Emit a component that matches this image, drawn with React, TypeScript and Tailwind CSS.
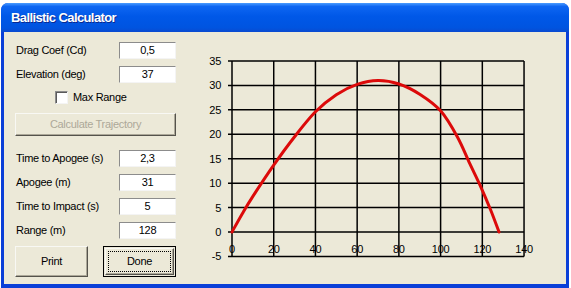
import React from "react";

// Ballistic calculator window, XP style
const X = (v: number) => 37 + v * 2.086;
const Y = (v: number) => 182 - v * 4.886;

const curve: [number, number][] = [
  [0, 0], [5, 3.8], [10, 7.3], [20, 13.7], [30, 19.5], [40, 24.6], [50, 28.1],
  [60, 30.2], [70, 31], [80, 30.3], [90, 28.2], [100, 24.8], [108, 19.5],
  [114, 14], [119, 9.5], [124, 4.5], [128, 0],
];

function smoothPath(data: [number, number][]) {
  const pts = data.map(([a, b]) => [X(a), Y(b)]);
  let d = `M${pts[0][0]},${pts[0][1]}`;
  for (let i = 0; i < pts.length - 1; i++) {
    const p0 = pts[i - 1] || pts[i];
    const p1 = pts[i];
    const p2 = pts[i + 1];
    const p3 = pts[i + 2] || p2;
    const c1x = p1[0] + (p2[0] - p0[0]) / 6;
    const c1y = p1[1] + (p2[1] - p0[1]) / 6;
    const c2x = p2[0] - (p3[0] - p1[0]) / 6;
    const c2y = p2[1] - (p3[1] - p1[1]) / 6;
    d += ` C${c1x},${c1y} ${c2x},${c2y} ${p2[0]},${p2[1]}`;
  }
  return d;
}

const Field = ({ label, value }: { label: string; value: string }) => (
  <div className="flex h-[17px] items-center justify-between">
    <span className="pl-[1px]">{label}</span>
    <div className="flex h-[17px] w-[57px] items-center justify-center border border-[#8c8c8c] border-b-[#f4f4f4] border-r-[#f4f4f4] bg-white leading-none">
      {value}
    </div>
  </div>
);

const Chart = () => {
  const xs = [0, 20, 40, 60, 80, 100, 120, 140];
  const ys = [35, 30, 25, 20, 15, 10, 5, 0, -5];
  return (
    <svg width="360" height="220" className="mt-[18px] ml-[19px] shrink-0">
      {ys.map((v) => (
        <g key={v}>
          <line x1={33} x2={X(140)} y1={Y(v)} y2={Y(v)} stroke="#000" strokeWidth={1.5} />
          <text x={26} y={Y(v)} textAnchor="end" dominantBaseline="central" fontSize={11} fill="#000" fontFamily="Liberation Sans, Arial, sans-serif">
            {v}
          </text>
        </g>
      ))}
      {xs.map((v) => (
        <g key={v}>
          <line x1={X(v)} x2={X(v)} y1={Y(35)} y2={Y(-5)} stroke="#000" strokeWidth={1.5} />
          <text x={X(v)} y={199} textAnchor="middle" dominantBaseline="central" fontSize={11} fill="#000" fontFamily="Liberation Sans, Arial, sans-serif">
            {v}
          </text>
        </g>
      ))}
      <path d={smoothPath(curve)} fill="none" stroke="#dc0a0a" strokeWidth={3} strokeLinecap="round" />
    </svg>
  );
};

export default function App() {
  return (
    <div className="h-[288px] w-[571px] overflow-hidden bg-white font-['Liberation_Sans',Arial,sans-serif] text-[11px] tracking-[-0.3px] text-black">
      <div className="ml-[1px] mt-[3px] flex h-[285px] w-[568px] flex-col rounded-t-[7px] bg-[#0a3fd8] px-[3px] pb-[4px]">
        <div className="-mx-[3px] flex h-[29px] items-center rounded-t-[7px] bg-[linear-gradient(to_bottom,#4a9cff_0%,#0e66f2_12%,#0058e8_45%,#0054e0_85%,#0a4ad0_100%)] pl-[10px]">
          <span className="text-[13px] font-bold tracking-[-0.6px] text-white [text-shadow:1px_1px_#0a2a90]">
            Ballistic Calculator
          </span>
        </div>
        <div className="flex flex-1 bg-[#ece9d8]">
          <div className="ml-[11px] flex w-[161px] flex-col">
            <div className="mt-[10px] flex flex-col gap-[7px]">
              <Field label="Drag Coef (Cd)" value="0,5" />
              <Field label="Elevation (deg)" value="37" />
            </div>
            <div className="mt-[8px] flex h-[13px] items-center pl-[40px]">
              <div className="h-[13px] w-[13px] border border-[#8c8c8c] border-b-[#f4f4f4] border-r-[#f4f4f4] bg-white shadow-[inset_1px_1px_#5a5a5a]" />
              <span className="ml-[5px]">Max Range</span>
            </div>
            <div className="mt-[9px] flex h-[23px] items-center justify-center border border-[#f8f8f4] border-b-[#55534c] border-r-[#55534c] bg-[#ece9d8] text-[#aca899] shadow-[inset_-1px_-1px_#aca899]">
              Calculate Trajectory
            </div>
            <div className="mt-[14px] flex flex-col gap-[7px]">
              <Field label="Time to Apogee (s)" value="2,3" />
              <Field label="Apogee (m)" value="31" />
              <Field label="Time to Impact (s)" value="5" />
              <Field label="Range (m)" value="128" />
            </div>
            <div className="mt-[7px] flex justify-between">
              <div className="flex h-[31px] w-[73px] items-center justify-center border border-[#f8f8f4] border-b-[#55534c] border-r-[#55534c] shadow-[inset_-1px_-1px_#aca899]">
                Print
              </div>
              <div className="flex h-[31px] w-[73px] border border-black p-[1px]">
                <div className="flex flex-1 border border-[#f8f8f4] border-b-[#55534c] border-r-[#55534c] p-[2px] shadow-[inset_-1px_-1px_#aca899]">
                  <div className="flex flex-1 items-center justify-center border border-dotted border-black">
                    Done
                  </div>
                </div>
              </div>
            </div>
          </div>
          <Chart />
        </div>
      </div>
    </div>
  );
}
